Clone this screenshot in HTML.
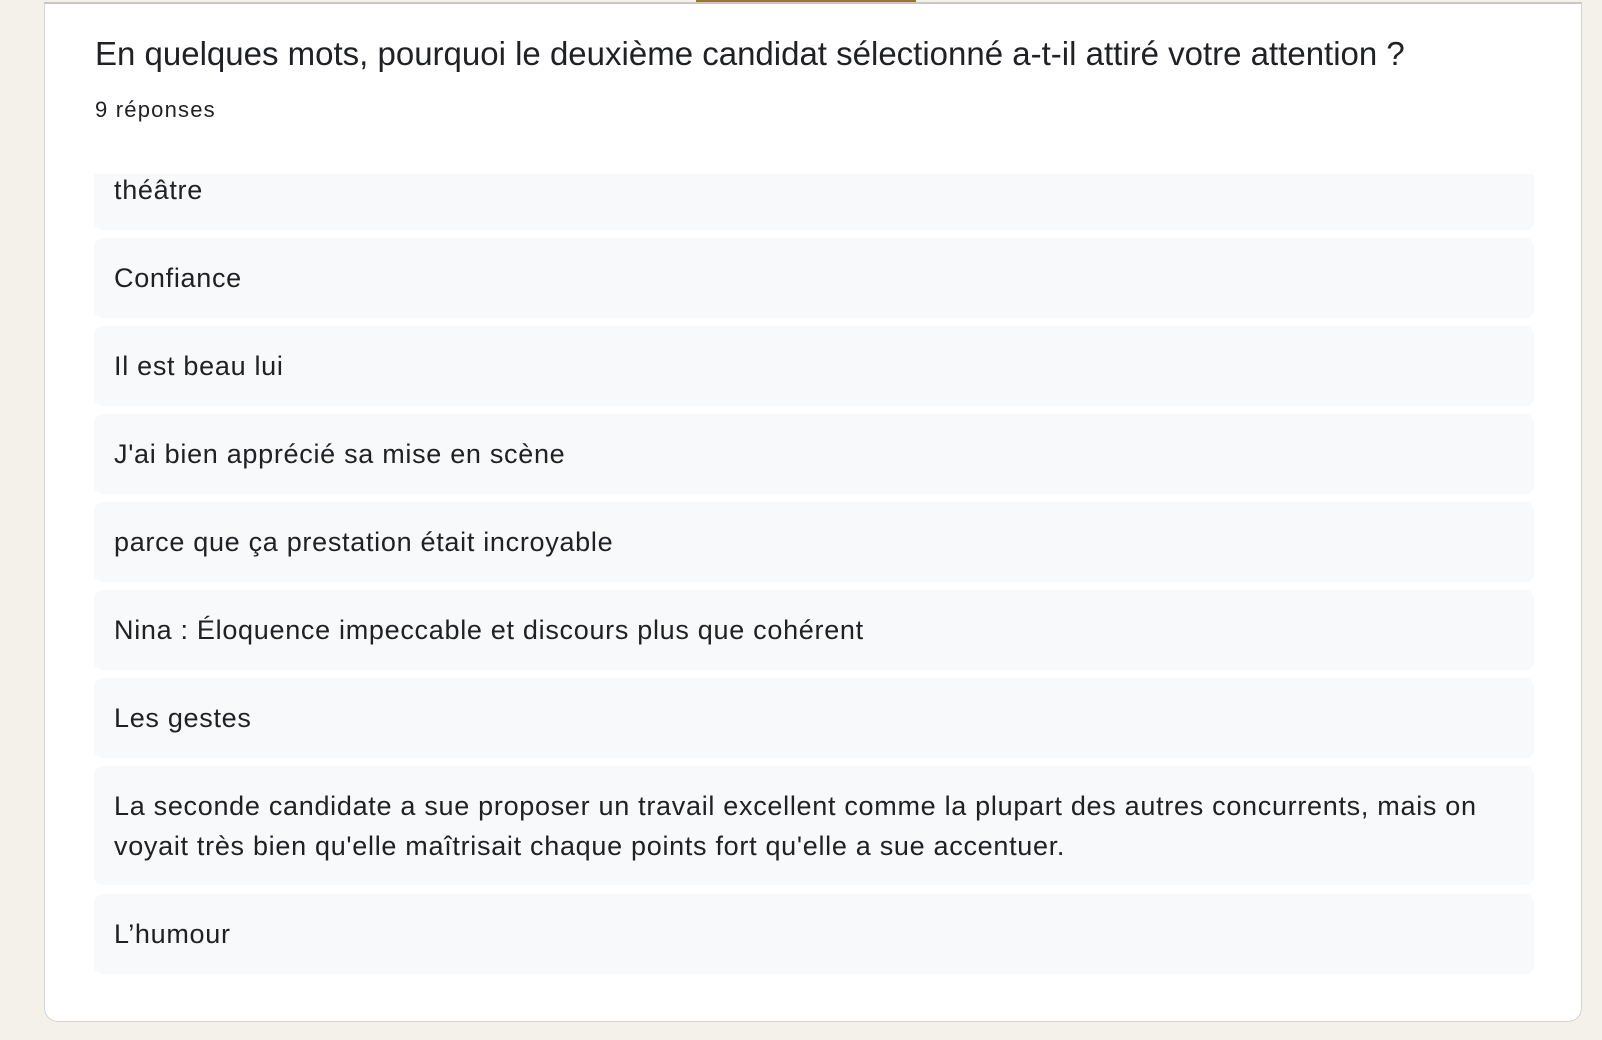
<!DOCTYPE html>
<html><head><meta charset="utf-8"><style>
html,body{margin:0;padding:0;width:1602px;height:1040px;overflow:hidden;background:#f4f1ea;font-family:"Liberation Sans",sans-serif;color:#202124}
.card{position:absolute;left:44px;top:2px;width:1538px;height:1020px;background:#fff;border:1px solid #d4d4d8;border-top:2px solid #c6c6cb;border-radius:0 0 14px 14px;box-sizing:border-box}
.gold{position:absolute;left:696px;top:0;width:220px;height:2px;background:#9a7628}
.q{position:absolute;left:95px;top:35px;font-size:33px;white-space:nowrap;color:#202124}
.n{position:absolute;left:95px;top:97px;font-size:22px;letter-spacing:1.2px;color:#202124}
.list{position:absolute;left:94px;top:174px;width:1440px;height:800px;overflow:hidden}
.it{position:absolute;left:0;width:1440px;background:#f8f9fa;border-radius:8px;box-sizing:border-box;padding:0 20px;font-size:27px;letter-spacing:0.7px;line-height:40px;display:flex;align-items:center}
</style></head><body>
<div class="card"></div>
<div class="gold"></div>
<div class="q">En quelques mots, pourquoi le deuxième candidat sélectionné a-t-il attiré votre attention ?</div>
<div class="n">9 réponses</div>
<div class="list">
<div class="it" style="top:-24px;height:80px">théâtre</div>
<div class="it" style="top:64px;height:80px">Confiance</div>
<div class="it" style="top:152px;height:80px">Il est beau lui</div>
<div class="it" style="top:240px;height:80px">J'ai bien apprécié sa mise en scène</div>
<div class="it" style="top:328px;height:80px">parce que ça prestation était incroyable</div>
<div class="it" style="top:416px;height:80px">Nina : Éloquence impeccable et discours plus que cohérent</div>
<div class="it" style="top:504px;height:80px">Les gestes</div>
<div class="it" style="top:592px;height:119px">La seconde candidate a sue proposer un travail excellent comme la plupart des autres concurrents, mais on voyait très bien qu'elle maîtrisait chaque points fort qu'elle a sue accentuer.</div>
<div class="it" style="top:720px;height:80px">L’humour</div>
</div>
</body></html>
